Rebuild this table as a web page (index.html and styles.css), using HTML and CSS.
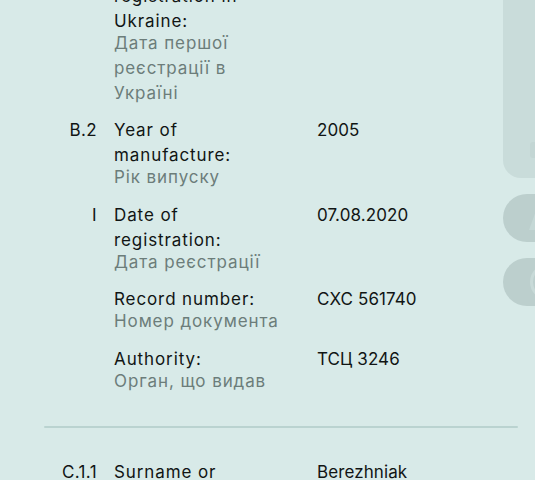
FILE: index.html
```html
<!DOCTYPE html>
<html lang="uk">
<head>
<meta charset="utf-8">
<link rel="stylesheet" href="styles.css">
</head>
<body>
<div class="screen">
  <div class="content">
    <section class="section first">
      <div class="row">
        <div class="code">B.1</div>
        <div class="label">
          <div class="en">Date of first registration in Ukraine:</div>
          <div class="ua">Дата першої реєстрації в Україні</div>
        </div>
        <div class="value">21.09.2005</div>
      </div>
      <div class="row">
        <div class="code">B.2</div>
        <div class="label">
          <div class="en">Year of manufacture:</div>
          <div class="ua">Рік випуску</div>
        </div>
        <div class="value">2005</div>
      </div>
      <div class="row">
        <div class="code">I</div>
        <div class="label">
          <div class="en">Date of registration:</div>
          <div class="ua">Дата реєстрації</div>
        </div>
        <div class="value">07.08.2020</div>
      </div>
      <div class="row">
        <div class="code"></div>
        <div class="label">
          <div class="en">Record number:</div>
          <div class="ua">Номер документа</div>
        </div>
        <div class="value">CXC 561740</div>
      </div>
      <div class="row">
        <div class="code"></div>
        <div class="label">
          <div class="en">Authority:</div>
          <div class="ua">Орган, що видав</div>
        </div>
        <div class="value">ТСЦ 3246</div>
      </div>
    </section>
    <hr class="divider">
    <section class="section">
      <div class="row">
        <div class="code">C.1.1</div>
        <div class="label">
          <div class="en">Surname or company name:</div>
          <div class="ua">Прізвище або назва</div>
        </div>
        <div class="value">Berezhniak</div>
      </div>
    </section>
  </div>

  <div class="side">
    <div class="side-card"><span class="glyph card-glyph"></span></div>
    <div class="side-btn"><span class="glyph tri"></span></div>
    <div class="side-btn"><span class="glyph ring"></span></div>
  </div>
</div>
</body>
</html>
```
FILE: styles.css
```css
html, body {
  margin: 0;
  padding: 0;
  background: #d8eae8;
}
body {
  font-family: Inter, "Noto Sans", sans-serif;
  font-size: 17px;
  line-height: 25px;
  color: #111514;
}
.screen {
  position: relative;
  width: 535px;
  height: 480px;
  overflow: hidden;
}
.content {
  width: 474px;
  margin-left: 44px;
  margin-top: -41.5px;
}
.section {
  display: flex;
  flex-direction: column;
  gap: 12.5px;
}
.row {
  display: grid;
  grid-template-columns: 53px 186px 1fr;
  column-gap: 17px;
}
.code {
  text-align: right;
  white-space: nowrap;
  letter-spacing: 0.4px;
}
.label {
  letter-spacing: 0.9px;
  padding-right: 14px;
}
.ua {
  color: #6c7d7a;
  margin-top: -3px;
}
.value {
  letter-spacing: 0.1px;
}
.divider {
  border: 0;
  height: 2px;
  background: #bad3d0;
  border-radius: 1px;
  margin: 32.5px 0 31.5px;
}
.side {
  position: absolute;
  left: 503px;
  top: -40px;
  display: flex;
  flex-direction: column;
  gap: 16px;
}
.side-card {
  position: relative;
  width: 64px;
  height: 218px;
  border-radius: 18px;
  background: #c9dcda;
  overflow: hidden;
}
.side-btn {
  position: relative;
  width: 64px;
  height: 48px;
  border-radius: 24px;
  background: #bccfcd;
  overflow: hidden;
}
.glyph {
  position: absolute;
  display: block;
}
.card-glyph {
  left: 27px;
  bottom: 20px;
  width: 10px;
  height: 16px;
  border-radius: 3px;
  background: #c3d6d4;
}
.tri {
  left: 26px;
  top: 14px;
  width: 0;
  height: 0;
  border-left: 8px solid transparent;
  border-right: 8px solid transparent;
  border-bottom: 22px solid #c5d8d6;
}
.ring {
  left: 27px;
  top: 6px;
  width: 30px;
  height: 30px;
  border-radius: 50%;
  border: 3px solid #c8dad8;
}
```
